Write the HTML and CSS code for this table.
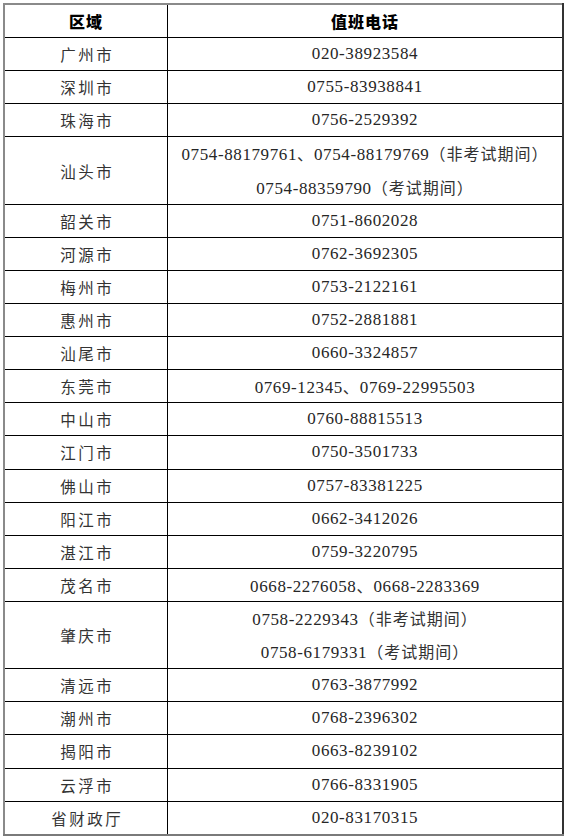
FILE: index.html
```html
<!DOCTYPE html>
<html lang="zh-CN">
<head>
<meta charset="utf-8">
<link rel="stylesheet" href="styles.css">
</head>
<body>
<table class="duty">
  <thead>
    <tr><th class="area"><div class="ln">区域</div></th><th class="phone"><div class="ln">值班电话</div></th></tr>
  </thead>
  <tbody>
    <tr><td class="city"><div class="ln">广州市</div></td><td class="num"><div class="ln">020-38923584</div></td></tr>
    <tr><td class="city"><div class="ln">深圳市</div></td><td class="num"><div class="ln">0755-83938841</div></td></tr>
    <tr><td class="city"><div class="ln">珠海市</div></td><td class="num"><div class="ln">0756-2529392</div></td></tr>
    <tr><td class="city"><div class="ln">汕头市</div></td><td class="num"><div class="ln2">0754-88179761<span class="cj">、</span>0754-88179769<span class="cj">（非考试期间）</span></div><div class="ln2">0754-88359790<span class="cj">（考试期间）</span></div></td></tr>
    <tr><td class="city"><div class="ln">韶关市</div></td><td class="num"><div class="ln">0751-8602028</div></td></tr>
    <tr><td class="city"><div class="ln">河源市</div></td><td class="num"><div class="ln">0762-3692305</div></td></tr>
    <tr><td class="city"><div class="ln">梅州市</div></td><td class="num"><div class="ln">0753-2122161</div></td></tr>
    <tr><td class="city"><div class="ln">惠州市</div></td><td class="num"><div class="ln">0752-2881881</div></td></tr>
    <tr><td class="city"><div class="ln">汕尾市</div></td><td class="num"><div class="ln">0660-3324857</div></td></tr>
    <tr><td class="city"><div class="ln">东莞市</div></td><td class="num"><div class="ln">0769-12345<span class="cj">、</span>0769-22995503</div></td></tr>
    <tr><td class="city"><div class="ln">中山市</div></td><td class="num"><div class="ln">0760-88815513</div></td></tr>
    <tr><td class="city"><div class="ln">江门市</div></td><td class="num"><div class="ln">0750-3501733</div></td></tr>
    <tr><td class="city"><div class="ln">佛山市</div></td><td class="num"><div class="ln">0757-83381225</div></td></tr>
    <tr><td class="city"><div class="ln">阳江市</div></td><td class="num"><div class="ln">0662-3412026</div></td></tr>
    <tr><td class="city"><div class="ln">湛江市</div></td><td class="num"><div class="ln">0759-3220795</div></td></tr>
    <tr><td class="city"><div class="ln">茂名市</div></td><td class="num"><div class="ln">0668-2276058<span class="cj">、</span>0668-2283369</div></td></tr>
    <tr><td class="city"><div class="ln">肇庆市</div></td><td class="num"><div class="ln2">0758-2229343<span class="cj">（非考试期间）</span></div><div class="ln2">0758-6179331<span class="cj">（考试期间）</span></div></td></tr>
    <tr><td class="city"><div class="ln">清远市</div></td><td class="num"><div class="ln">0763-3877992</div></td></tr>
    <tr><td class="city"><div class="ln">潮州市</div></td><td class="num"><div class="ln">0768-2396302</div></td></tr>
    <tr><td class="city"><div class="ln">揭阳市</div></td><td class="num"><div class="ln">0663-8239102</div></td></tr>
    <tr><td class="city"><div class="ln">云浮市</div></td><td class="num"><div class="ln">0766-8331905</div></td></tr>
    <tr><td class="city"><div class="ln">省财政厅</div></td><td class="num"><div class="ln">020-83170315</div></td></tr>
  </tbody>
</table>
</body>
</html>
```
FILE: styles.css
```css
html, body {
  margin: 0;
  padding: 0;
  background: #fff;
}
body {
  padding: 3px 0 0 3px;
}
.duty {
  border-collapse: collapse;
  width: 561px;
  border-top: 2px solid #8a8a8a;
  border-left: 2px solid #8a8a8a;
  border-bottom: 2px solid #7a7a7a;
  border-right: 2px solid #333;
  color: #262626;
  font-family: "Liberation Serif", "Noto Sans CJK SC", serif;
}
.duty th, .duty td {
  border: 1px solid #000;
  padding: 0;
  text-align: center;
  vertical-align: middle;
}
.ln {
  height: 32.1px;
  line-height: 32px;
  white-space: nowrap;
}
.ln2 {
  height: 33.2px;
  line-height: 33px;
  white-space: nowrap;
}
.duty th {
  font-family: "Noto Sans CJK SC", sans-serif;
  font-weight: 900;
  font-size: 16px;
  color: #000;
  letter-spacing: 1px;
}
.area {
  width: 162px;
}
.city {
  font-family: "Noto Sans CJK SC", sans-serif;
  font-size: 15.5px;
  font-weight: 400;
  letter-spacing: 2.5px;
  text-indent: 2.5px;
  color: #333;
}
.num {
  font-size: 17px;
  letter-spacing: 0.6px;
}
.cj {
  font-family: "Noto Sans CJK SC", sans-serif;
  font-size: 16px;
  letter-spacing: 1px;
  color: #333;
}
```
